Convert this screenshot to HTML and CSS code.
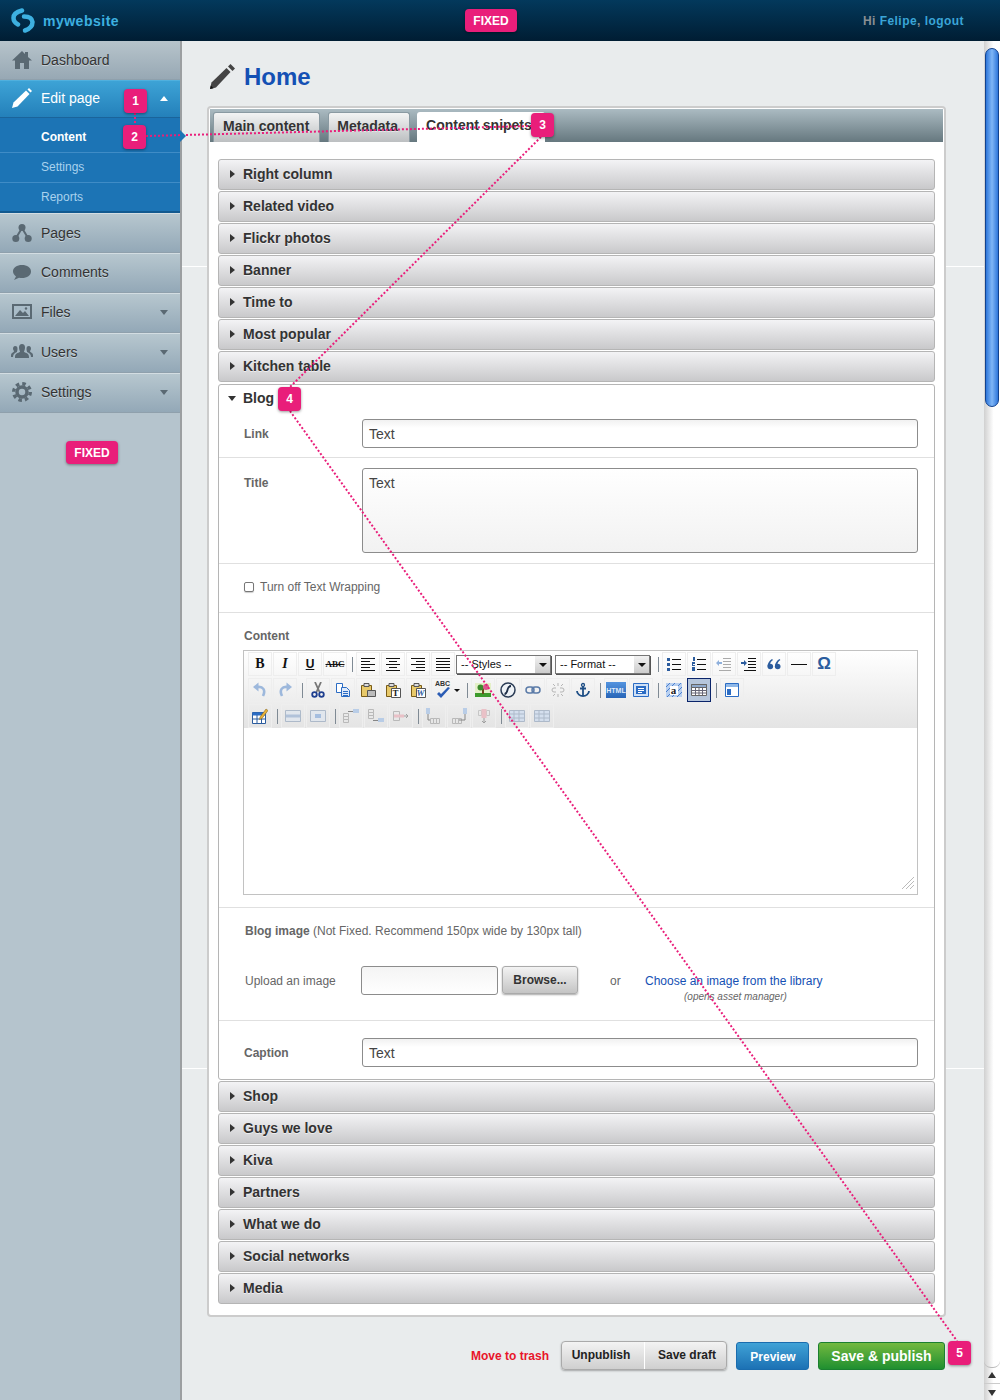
FILE: index.html
```html
<!DOCTYPE html>
<html lang="en">
<head>
    <meta charset="UTF-8">
    <title>mywebsite - Edit page</title>
    <link rel="stylesheet" href="styles.css">
</head>
<body>
    <svg class="defs" width="0" height="0">
        <symbol id="i-lines-l" viewBox="0 0 16 16"><path d="M1 2.500h14M1 5.500h9M1 8.500h14M1 11.500h9M1 14.500h14" stroke="#111" fill="none"/></symbol>
        <symbol id="i-lines-c" viewBox="0 0 16 16"><path d="M1 2.500h14M4 5.500h8M1 8.500h14M4 11.500h8M1 14.500h14" stroke="#111" fill="none"/></symbol>
        <symbol id="i-lines-r" viewBox="0 0 16 16"><path d="M1 2.500h14M6 5.500h9M1 8.500h14M6 11.500h9M1 14.500h14" stroke="#111" fill="none"/></symbol>
        <symbol id="i-lines-j" viewBox="0 0 16 16"><path d="M1 2.500h14M1 5.500h14M1 8.500h14M1 11.500h14M1 14.500h14" stroke="#111" fill="none"/></symbol>
        <symbol id="i-ul" viewBox="0 0 16 16"><path d="M6 3.500h9M6 8.500h9M6 13.500h9" stroke="#111" fill="none"/><path d="M1 2h3v3H1zM1 7h3v3H1zM1 12h3v3H1z" fill="#2b5c9e"/></symbol>
        <symbol id="i-ol" viewBox="0 0 16 16"><path d="M6 3.500h9M6 8.500h9M6 13.500h9" stroke="#111" fill="none"/><path d="M2 1h2v4H2zM1 6h3v2H2v1h2v1H1zM1 11h3v4H1z" fill="#2b5c9e"/></symbol>
        <symbol id="i-out" viewBox="0 0 16 16"><path d="M7 2.500h8M7 5.500h8M7 8.500h8M7 11.500h8M3 14.500h12" stroke="#aaa" fill="none"/><path d="M6 6H3V4L0 7l3 3V8h3z" fill="#8fb0dc"/></symbol>
        <symbol id="i-ind" viewBox="0 0 16 16"><path d="M7 2.500h8M7 5.500h8M7 8.500h8M7 11.500h8M3 14.500h12" stroke="#111" fill="none"/><path d="M0 6h3V4l3 3-3 3V8H0z" fill="#2b5c9e"/></symbol>
        <symbol id="i-quote" viewBox="0 0 16 16"><circle cx="4.300" cy="10.500" r="2.800" fill="#2b5c9e"/><circle cx="11.700" cy="10.500" r="2.800" fill="#2b5c9e"/><path d="M6 3C3 5 1.500 7.500 1.500 10.500L4 9c0-2 1-4 3-5zM13.400 3c-3 2-4.500 4.500-4.500 7.500l2.500-1.500c0-2 1-4 3-5z" fill="#2b5c9e"/></symbol>
        <symbol id="i-undo" viewBox="0 0 16 16"><path d="M5 5c6-1 9 3 6 9" stroke="#9db8dc" stroke-width="2.600" fill="none"/><path d="M6.500 0.500L1 5l5.500 4.500z" fill="#9db8dc"/></symbol>
        <symbol id="i-redo" viewBox="0 0 16 16"><path d="M11 5c-6-1-9 3-6 9" stroke="#9db8dc" stroke-width="2.600" fill="none"/><path d="M9.500 0.500L15 5 9.500 9.500z" fill="#9db8dc"/></symbol>
        <symbol id="i-cut" viewBox="0 0 16 16"><path d="M5 0l4.500 10M11 0L6.500 10" stroke="#777" stroke-width="1.800" fill="none"/><circle cx="4.500" cy="12.500" r="2.300" fill="none" stroke="#1f3f8f" stroke-width="1.800"/><circle cx="11.500" cy="12.500" r="2.300" fill="none" stroke="#1f3f8f" stroke-width="1.800"/></symbol>
        <symbol id="i-copy" viewBox="0 0 16 16"><path d="M1.500 1.500h6v9h-6z" fill="#fff" stroke="#2b6cc4"/><path d="M6.500 5.500h5l3 3v6h-8z" fill="#dfeafa" stroke="#2b6cc4"/><path d="M8 9.500h5M8 11.500h5M8 13.500h5" stroke="#2b6cc4"/></symbol>
        <symbol id="i-paste" viewBox="0 0 16 16"><path d="M1.500 3.500h10v11h-10z" fill="#e8c96a" stroke="#7a5c16"/><path d="M4 1.500h5v3H4z" fill="#ddd" stroke="#555"/><path d="M7.500 8.500h8v6h-8z" fill="#bbb" stroke="#555"/></symbol>
        <symbol id="i-paste-doc" viewBox="0 0 16 16"><path d="M1.500 3.500h10v11h-10z" fill="#e8c96a" stroke="#7a5c16"/><path d="M4 1.500h5v3H4z" fill="#ddd" stroke="#555"/><path d="M6.500 6.500h9v9h-9z" fill="#fff" stroke="#555"/></symbol>
        <symbol id="i-spell" viewBox="0 0 16 16"><path d="M2 10l4 4 9-10-2-1-7 7-2-2z" fill="#2b5cb4"/></symbol>
        <symbol id="i-img" viewBox="0 0 16 16"><path d="M0 1h16v14H0z" fill="#e4f0c8"/><path d="M0 11h16v4H0z" fill="#3c9a2c"/><path d="M8 12V6" stroke="#6b4a1a" stroke-width="2"/><circle cx="5.500" cy="5.500" r="3" fill="#3c8a2c"/><circle cx="11" cy="5" r="3" fill="#d85a8c"/></symbol>
        <symbol id="i-flash" viewBox="0 0 16 16"><circle cx="8" cy="8" r="7" fill="#eef2f6" stroke="#2b3c55" stroke-width="1.500"/><path d="M11 4C8 4 8 6 7.500 8S6 12 4.500 12" stroke="#1f2f48" stroke-width="1.800" fill="none"/></symbol>
        <symbol id="i-link" viewBox="0 0 16 16"><rect x="1" y="5" width="8" height="6" rx="3" fill="none" stroke="#5b7ba8" stroke-width="1.500"/><rect x="7" y="5" width="8" height="6" rx="3" fill="none" stroke="#5b7ba8" stroke-width="1.500"/></symbol>
        <symbol id="i-unlink" viewBox="0 0 16 16"><path d="M6 6H4a2 2 0 000 4h2M10 6h2a2 2 0 010 4h-2M3 2l2 2M8 1v3M13 2l-2 2M3 14l2-2M8 15v-3M13 14l-2-2" fill="none" stroke="#b5b5b5"/></symbol>
        <symbol id="i-anchor" viewBox="0 0 16 16"><circle cx="8" cy="3" r="1.500" fill="none" stroke="#1f4f86" stroke-width="1.300"/><path d="M8 4v10M5 6.500h6M2 9c0 3 3 5 6 5s6-2 6-5" fill="none" stroke="#1f4f86" stroke-width="1.800"/></symbol>
        <symbol id="i-box" viewBox="0 0 16 16"><path d="M.5 1.500h15v13H.5z" fill="#cfe0f6" stroke="#2b6cc4"/><path d="M3 4h10v8H3z" fill="#2b6cc4"/><path d="M5 6.500h6M5 8.500h6M5 10.500h4" stroke="#fff"/></symbol>
        <symbol id="i-attr" viewBox="0 0 16 16"><path d="M0 1h16v14H0z" fill="#b9d0f0"/><path d="M0 5l4-4M0 10l9-9M1 15L15 1M6 15l10-10M11 15l5-5" stroke="#4a80d0"/><path d="M4 4h8v9H4z" fill="#fff"/></symbol>
        <symbol id="i-table" viewBox="0 0 16 16"><path d="M.5 2.500h15v11H.5z" fill="#fff" stroke="#666"/><path d="M.5 2.500h15v3H.5z" fill="#8fa9cc" stroke="#666"/><path d="M.5 8.500h15M.5 11h15M4.500 5v8M8 5v8M11.500 5v8" stroke="#667"/></symbol>
        <symbol id="i-layout" viewBox="0 0 16 16"><path d="M1.500 1.500h13v13h-13z" fill="#fff" stroke="#2b6cc4"/><path d="M2 2h12v3H2z" fill="#8fb8e8"/><path d="M3 7h4v6H3z" fill="#2b6cc4"/></symbol>
        <symbol id="i-edit" viewBox="0 0 16 16"><path d="M.5 4.500h13v11H.5z" fill="#fff" stroke="#2b5c9e"/><path d="M.5 4.500h13v3H.5z" fill="#2b6cc4"/><path d="M.5 11h13M5 7v8M9.500 7v8" stroke="#2b5c9e"/><path d="M8 9l6-8 2 1.500-6 8-2.500 1z" fill="#e8b23a" stroke="#7a5c16" stroke-width=".5"/></symbol>
        <symbol id="i-row" viewBox="0 0 16 16"><path d="M.5 2.500h15v11H.5z" fill="#dfe6ef" stroke="#9aabc0"/><path d="M1 6.500h14v3H1z" fill="#9fb6d4"/></symbol>
        <symbol id="i-cell" viewBox="0 0 16 16"><path d="M.5 2.500h15v11H.5z" fill="#dfe6ef" stroke="#9aabc0"/><path d="M5 6h6v4H5z" fill="#8fb0dc"/></symbol>
        <symbol id="i-row-before" viewBox="0 0 16 16"><path d="M.5 5.500h5v3h-5zM.5 8.500h5v3h-5zM.5 11.500h5v3h-5z" fill="none" stroke="#aaa"/><path d="M10 1h6v4h-6z" fill="#a9c4e6"/><path d="M5 3.500h5" stroke="#666"/></symbol>
        <symbol id="i-row-after" viewBox="0 0 16 16"><path d="M.5 1.500h5v3h-5zM.5 4.500h5v3h-5zM.5 7.500h5v3h-5z" fill="none" stroke="#aaa"/><path d="M10 10h6v4h-6z" fill="#a9c4e6"/><path d="M5 12.500h5" stroke="#666"/></symbol>
        <symbol id="i-row-del" viewBox="0 0 16 16"><path d="M.5 3.500h6v9h-6z" fill="none" stroke="#aaa"/><path d="M1 6.500h10v3H1z" fill="#eab4bc"/><path d="M11 8h4M13 6l2 2-2 2" fill="none" stroke="#888"/></symbol>
        <symbol id="i-col-before" viewBox="0 0 16 16"><path d="M4.500 10.500h3v5h-3zM7.500 10.500h3v5h-3zM10.500 10.500h3v5h-3z" fill="none" stroke="#aaa"/><path d="M0 0h4v6H0z" fill="#a9c4e6"/><path d="M2 6v6h2" fill="none" stroke="#666"/></symbol>
        <symbol id="i-col-after" viewBox="0 0 16 16"><path d="M1.500 10.500h3v5h-3zM4.500 10.500h3v5h-3zM7.500 10.500h3v5h-3z" fill="none" stroke="#aaa"/><path d="M12 0h4v6h-4z" fill="#a9c4e6"/><path d="M14 6v6h-6" fill="none" stroke="#666"/></symbol>
        <symbol id="i-col-del" viewBox="0 0 16 16"><path d="M2.500 2.500h3v5h-3zM10.500 2.500h3v5h-3z" fill="none" stroke="#bbb"/><path d="M5.500 1h5v9h-5z" fill="#eab4bc"/><path d="M8 10v5M6 13l2 2 2-2" fill="none" stroke="#888"/></symbol>
        <symbol id="i-grid" viewBox="0 0 16 16"><path d="M.5 2.500h15v11H.5z" fill="#cddcf0" stroke="#9aabc0"/><path d="M.5 6h15M.5 10h15M5 2.500v11M10 2.500v11" stroke="#9aabc0"/></symbol>
    </svg>

    <header class="topbar">
        <a class="logo" href="#">
            <svg width="26" height="26" viewBox="0 0 26 26"><path d="M12 2.500Q3.500 4.500 3.500 10Q3.500 14 8 16.500" fill="none" stroke="#3db0e0" stroke-width="4.500" stroke-linecap="round"/><path d="M14 8.500Q22 8.500 22.500 14Q22.500 20 15 22.500" fill="none" stroke="#3db0e0" stroke-width="4.500" stroke-linecap="round"/></svg>
            <span>mywebsite</span>
        </a>
        <span class="tag">FIXED</span>
        <p class="greeting">Hi <a href="#">Felipe</a>, <a href="#">logout</a></p>
    </header>

    <div class="layout">
        <nav class="sidebar">
            <a class="nav-item" href="#">
                <svg class="nav-icon" viewBox="0 0 20 20"><path d="M10 1L0 10.500h3V19h5v-6h4v6h5v-8.500h3L16 7V2h-3v2z" fill="#5a6973"/></svg>
                Dashboard
            </a>
            <a class="nav-item nav-active" href="#">
                <svg class="nav-icon" viewBox="0 0 20 20"><path d="M0 20l1.500-5.500L14 2.500l3.500 3.500L5.500 18.500z" fill="#fff"/><path d="M15.500 1.500L17 0l3 3-1.500 1.500z" fill="#fff"/></svg>
                Edit page
                <i class="caret caret-up"></i>
            </a>
            <ul class="subnav">
                <li class="sub-current"><a href="#">Content</a></li>
                <li><a href="#">Settings</a></li>
                <li><a href="#">Reports</a></li>
            </ul>
            <a class="nav-item nav-pages" href="#">
                <svg class="nav-icon" viewBox="0 0 20 20"><path d="M10 5L4 15M10 5l6 10" stroke="#5a6973" stroke-width="2" fill="none"/><circle cx="10" cy="4.500" r="3.500" fill="#5a6973"/><circle cx="3.800" cy="15.500" r="3.500" fill="#5a6973"/><circle cx="16.200" cy="15.500" r="3.500" fill="#5a6973"/></svg>
                Pages
            </a>
            <a class="nav-item" href="#">
                <svg class="nav-icon" viewBox="0 0 20 20"><path d="M10 3c5 0 9 2.500 9 6.500S15 16 10 16c-1 0-2 0-3-.3L2 18l2-3.500C2 13 1 11 1 9.500 1 5.500 5 3 10 3z" fill="#5a6973"/></svg>
                Comments
            </a>
            <a class="nav-item nav-more" href="#">
                <svg class="nav-icon" viewBox="0 0 20 20"><path d="M0 2h20v15H0z" fill="#5a6973"/><path d="M2 4h16v11H2z" fill="#a9bcc8"/><path d="M3 14l5-6 3 3 2-2 4 5z" fill="#5a6973"/><circle cx="14" cy="6.500" r="1.200" fill="#5a6973"/></svg>
                Files
                <i class="caret"></i>
            </a>
            <a class="nav-item nav-more" href="#">
                <svg class="nav-icon nav-icon-wide" viewBox="0 0 22 20"><path d="M11 2c2 0 3 1.500 3 3.500S13 9 13 10c2 1 5 1 5 5v1H4v-1c0-4 3-4 5-5 0-1-1-2.500-1-4.500S9 2 11 2z" fill="#5a6973"/><path d="M4 4c2 0 2.500 1 2.500 3 0 1.500-.5 2-.5 3-2 1-4 2-4 5H0v-2c0-2 2-2.500 3-3.500 0-1-1-1.500-1-3S3 4 4 4zM18 4c-2 0-2.500 1-2.500 3 0 1.500.5 2 .5 3 2 1 4 2 4 5h2v-2c0-2-2-2.500-3-3.500 0-1 1-1.500 1-3S19 4 18 4z" fill="#5a6973"/></svg>
                Users
                <i class="caret"></i>
            </a>
            <a class="nav-item nav-more" href="#">
                <svg class="nav-icon" viewBox="0 0 20 20"><circle cx="10" cy="10" r="8.300" fill="none" stroke="#5a6973" stroke-width="3.400" stroke-dasharray="3.500 3.020"/><circle cx="10" cy="10" r="5" fill="none" stroke="#5a6973" stroke-width="3.500"/></svg>
                Settings
                <i class="caret"></i>
            </a>
            <div class="sidebar-foot"><span class="tag">FIXED</span></div>
        </nav>

        <main class="main">
            <div class="page-head">
                <svg width="25" height="25" viewBox="0 0 25 25"><path d="M0 25l1.500-6.500L16.500 4l4 4L6 23.500z" fill="#444"/><path d="M0 25l.8-3.500 2.700 2.700z" fill="#111"/><path d="M18 2.500L20.500 0 25 4.500 22.500 7z" fill="#444"/></svg>
                <h1>Home</h1>
            </div>

            <section class="panel">
                <div class="tabs">
                    <a class="tab" href="#">Main content</a>
                    <a class="tab" href="#">Metadata</a>
                    <a class="tab tab-active" href="#">Content snipets</a>
                </div>

                <div class="accordion">
                    <div class="acc-row"><i class="arrow"></i>Right column</div>
                    <div class="acc-row"><i class="arrow"></i>Related video</div>
                    <div class="acc-row"><i class="arrow"></i>Flickr photos</div>
                    <div class="acc-row"><i class="arrow"></i>Banner</div>
                    <div class="acc-row"><i class="arrow"></i>Time to</div>
                    <div class="acc-row"><i class="arrow"></i>Most popular</div>
                    <div class="acc-row"><i class="arrow"></i>Kitchen table</div>

                    <div class="acc-open">
                        <div class="acc-head"><i class="arrow arrow-down"></i>Blog</div>

                        <div class="field field-link">
                            <label class="field-label">Link</label>
                            <div class="text-input">Text</div>
                        </div>
                        <div class="field field-title">
                            <label class="field-label">Title</label>
                            <div class="text-input text-area">Text</div>
                        </div>
                        <div class="field-check">
                            <span class="check"></span>
                            Turn off Text Wrapping
                        </div>

                        <div class="field-editor">
                            <label class="field-label">Content</label>
                            <div class="editor">
                                <div class="toolbar">
                                    <div class="tool-row">
                                        <span class="tb tb-text tb-b">B</span>
                                        <span class="tb tb-text tb-i">I</span>
                                        <span class="tb tb-text tb-u">U</span>
                                        <span class="tb tb-text tb-s">ABC</span>
                                        <span class="sep"></span>
                                        <span class="tb"><svg><use href="#i-lines-l"/></svg></span>
                                        <span class="tb"><svg><use href="#i-lines-c"/></svg></span>
                                        <span class="tb"><svg><use href="#i-lines-r"/></svg></span>
                                        <span class="tb"><svg><use href="#i-lines-j"/></svg></span>
                                        <span class="combo">-- Styles --<i></i></span>
                                        <span class="combo">-- Format --<i></i></span>
                                        <span class="sep sep-wide"></span>
                                        <span class="tb"><svg><use href="#i-ul"/></svg></span>
                                        <span class="tb"><svg><use href="#i-ol"/></svg></span>
                                        <span class="tb"><svg><use href="#i-out"/></svg></span>
                                        <span class="tb"><svg><use href="#i-ind"/></svg></span>
                                        <span class="tb"><svg><use href="#i-quote"/></svg></span>
                                        <span class="tb tb-text tb-hr"></span>
                                        <span class="tb tb-text tb-omega">Ω</span>
                                    </div>
                                    <div class="tool-row">
                                        <span class="tb"><svg><use href="#i-undo"/></svg></span>
                                        <span class="tb"><svg><use href="#i-redo"/></svg></span>
                                        <span class="sep"></span>
                                        <span class="tb"><svg><use href="#i-cut"/></svg></span>
                                        <span class="tb"><svg><use href="#i-copy"/></svg></span>
                                        <span class="tb"><svg><use href="#i-paste"/></svg></span>
                                        <span class="tb tb-letter"><svg><use href="#i-paste-doc"/></svg><b>T</b></span>
                                        <span class="tb tb-letter tb-word"><svg><use href="#i-paste-doc"/></svg><b>W</b></span>
                                        <span class="tb tb-split"><b>ABC</b><svg><use href="#i-spell"/></svg></span>
                                        <i class="split-arrow"></i>
                                        <span class="sep"></span>
                                        <span class="tb"><svg><use href="#i-img"/></svg></span>
                                        <span class="tb"><svg><use href="#i-flash"/></svg></span>
                                        <span class="tb"><svg><use href="#i-link"/></svg></span>
                                        <span class="tb"><svg><use href="#i-unlink"/></svg></span>
                                        <span class="tb"><svg><use href="#i-anchor"/></svg></span>
                                        <span class="sep"></span>
                                        <span class="tb tb-html">HTML</span>
                                        <span class="tb"><svg><use href="#i-box"/></svg></span>
                                        <span class="sep"></span>
                                        <span class="tb tb-letter tb-attr"><svg><use href="#i-attr"/></svg><b>a</b></span>
                                        <span class="tb tb-on"><svg><use href="#i-table"/></svg></span>
                                        <span class="sep"></span>
                                        <span class="tb"><svg><use href="#i-layout"/></svg></span>
                                    </div>
                                    <div class="tool-row">
                                        <span class="tb"><svg><use href="#i-edit"/></svg></span>
                                        <span class="sep"></span>
                                        <span class="tb tb-off"><svg><use href="#i-row"/></svg></span>
                                        <span class="tb tb-off"><svg><use href="#i-cell"/></svg></span>
                                        <span class="sep"></span>
                                        <span class="tb tb-off"><svg><use href="#i-row-before"/></svg></span>
                                        <span class="tb tb-off"><svg><use href="#i-row-after"/></svg></span>
                                        <span class="tb tb-off"><svg><use href="#i-row-del"/></svg></span>
                                        <span class="sep"></span>
                                        <span class="tb tb-off"><svg><use href="#i-col-before"/></svg></span>
                                        <span class="tb tb-off"><svg><use href="#i-col-after"/></svg></span>
                                        <span class="tb tb-off"><svg><use href="#i-col-del"/></svg></span>
                                        <span class="sep"></span>
                                        <span class="tb tb-off"><svg><use href="#i-grid"/></svg></span>
                                        <span class="tb tb-off"><svg><use href="#i-grid"/></svg></span>
                                    </div>
                                </div>
                                <div class="editor-body">
                                    <svg class="grip" width="14" height="14" viewBox="0 0 14 14"><path d="M13 1L1 13M13 5l-8 8M13 9l-4 4" stroke="#bbb" fill="none"/></svg>
                                </div>
                            </div>
                        </div>

                        <div class="field-image">
                            <p class="image-note"><b>Blog image</b> (Not Fixed. Recommend 150px wide by 130px tall)</p>
                            <div class="upload-row">
                                <span class="upload-label">Upload an image</span>
                                <div class="file-input"></div>
                                <a class="browse" href="#">Browse...</a>
                                <span class="upload-or">or</span>
                                <div class="library">
                                    <a href="#">Choose an image from the library</a>
                                    <small>(opens asset manager)</small>
                                </div>
                            </div>
                        </div>

                        <div class="field field-caption">
                            <label class="field-label">Caption</label>
                            <div class="text-input">Text</div>
                        </div>
                    </div>

                    <div class="acc-row"><i class="arrow"></i>Shop</div>
                    <div class="acc-row"><i class="arrow"></i>Guys we love</div>
                    <div class="acc-row"><i class="arrow"></i>Kiva</div>
                    <div class="acc-row"><i class="arrow"></i>Partners</div>
                    <div class="acc-row"><i class="arrow"></i>What we do</div>
                    <div class="acc-row"><i class="arrow"></i>Social networks</div>
                    <div class="acc-row"><i class="arrow"></i>Media</div>
                </div>
            </section>

            <div class="actions">
                <a class="trash" href="#">Move to trash</a>
                <div class="btn-group">
                    <a class="btn" href="#">Unpublish</a>
                    <a class="btn" href="#">Save draft</a>
                </div>
                <a class="btn-preview" href="#">Preview</a>
                <a class="btn-save" href="#">Save &amp; publish</a>
            </div>
        </main>

        <div class="scrollbar">
            <div class="thumb"></div>
            <div class="track"></div>
            <span class="sb-arrow sb-up"></span>
            <span class="sb-arrow sb-down"></span>
        </div>
    </div>

    <!-- annotation overlay -->
    <svg class="notes" width="1000" height="1400">
        <path d="M135 113V125M146 136L531 126M541 137L290 387M290 411L957 1341" fill="none" stroke="#e91e7a" stroke-width="2" stroke-dasharray="2 2"/>
    </svg>
    <span class="badge badge-1">1</span>
    <span class="badge badge-2">2</span>
    <span class="badge badge-3">3</span>
    <span class="badge badge-4">4</span>
    <span class="badge badge-5">5</span>
</body>
</html>
```

FILE: styles.css
```css
* {
    box-sizing: border-box;
}
html, body {
    margin: 0;
    padding: 0;
}
body {
    position: relative;
    width: 1000px;
    height: 1400px;
    overflow: hidden;
    font-family: "Liberation Sans", Arial, sans-serif;
    font-size: 12px;
    color: #333;
    background-color: #e9eced;
}
a {
    color: inherit;
    text-decoration: none;
}
.defs {
    position: absolute;
}

/* top bar */
.topbar {
    display: flex;
    align-items: center;
    height: 41px;
    background: linear-gradient(#03395c, #001d33);
    padding: 0 36px 0 10px;
}
.logo {
    display: flex;
    align-items: center;
    gap: 7px;
    width: 455px;
    font-size: 14px;
    font-weight: bold;
    letter-spacing: .5px;
    color: #3db0e0;
}
.tag {
    display: inline-block;
    width: 52px;
    height: 23px;
    line-height: 24px;
    text-align: center;
    background: #e91e7a;
    color: #fff;
    font-size: 12px;
    font-weight: bold;
    border-radius: 4px;
    box-shadow: 0 1px 3px rgba(0, 0, 0, .4);
}
.greeting {
    margin: 0 0 0 auto;
    font-weight: bold;
    letter-spacing: .45px;
    color: #8a8f93;
}
.greeting a {
    color: #3aa5d8;
}

.layout {
    display: flex;
    height: 1359px;
    background-image: linear-gradient(transparent 225px, #fff 225px, #fff 226px, transparent 226px);
    background-size: 100% 802px;
}

/* sidebar */
.sidebar {
    width: 182px;
    flex-shrink: 0;
    background: #b5c4cd;
    border-right: 2px solid #9c9fa1;
}
.nav-item {
    position: relative;
    display: flex;
    align-items: center;
    gap: 9px;
    height: 40px;
    padding: 0 0 2px 12px;
    font-size: 14px;
    color: #333;
    text-shadow: 0 1px 0 rgba(255, 255, 255, .4);
    background: linear-gradient(#b7c7cf, #93a8b7);
    border-top: 1px solid #d3dde2;
    border-bottom: 1px solid #8fa0ac;
}
.nav-item:first-child {
    height: 39px;
    padding-bottom: 0;
    border-top: 0;
    background: linear-gradient(#b7c4cb, #97a8b4);
}
.nav-pages {
    padding-bottom: 1px;
}
.nav-icon {
    width: 20px;
    height: 20px;
    flex-shrink: 0;
}
.nav-icon-wide {
    width: 22px;
    margin-left: -1px;
    margin-right: -1px;
}
.nav-active {
    height: 38px;
    color: #fff;
    text-shadow: none;
    background: linear-gradient(#3da3d6, #2480ba);
    border-top: 1px solid #50b0de;
    border-bottom: 1px solid #1a649b;
}
.nav-active::after {
    content: "";
    position: absolute;
    left: 75px;
    bottom: -7px;
    border-left: 9px solid transparent;
    border-right: 9px solid transparent;
    border-top: 6px solid #2480ba;
}
.caret {
    position: absolute;
    right: 12px;
    top: 16px;
    border-left: 4.5px solid transparent;
    border-right: 4.5px solid transparent;
    border-top: 5px solid #5a6973;
}
.caret-up {
    top: 15px;
    border-top: 0;
    border-bottom: 5px solid #fff;
}
.subnav {
    position: relative;
    list-style: none;
    margin: 0;
    padding: 0;
    background: #1c74b5;
    border-bottom: 2px solid #12598f;
}
.subnav li {
    height: 30px;
    line-height: 29px;
    padding-left: 41px;
    color: #a9d2ee;
    border-bottom: 1px solid #3f8cc6;
}
.subnav li:last-child {
    height: 28px;
    border-bottom: 0;
}
.subnav .sub-current {
    height: 35px;
    line-height: 38px;
    color: #fff;
    font-weight: bold;
}
.sub-current::after {
    content: "";
    position: absolute;
    right: -6px;
    top: 12px;
    z-index: 1;
    border-top: 6px solid transparent;
    border-bottom: 6px solid transparent;
    border-left: 6px solid #1c74b5;
}
.sidebar-foot {
    padding: 28px 0 0 66px;
}

/* main column */
.main {
    flex: 1;
    padding: 0 38px 0 25px;
}
.page-head {
    display: flex;
    align-items: center;
    gap: 9px;
    height: 65px;
    padding: 6px 0 0 3px;
}
.page-head h1 {
    margin: 0;
    font-size: 24px;
    font-weight: bold;
    color: #1450b4;
}
.panel {
    background: #fff;
    border: 2px solid #ccc;
    border-radius: 4px;
    padding: 1px 1px 11px;
    height: 1211px;
}
.tabs {
    display: flex;
    gap: 8px;
    height: 33px;
    padding: 3px 0 0 3px;
    background: linear-gradient(#abbbc2, #66787f);
}
.tab {
    height: 30px;
    line-height: 27px;
    padding: 0 10px 0 9px;
    font-size: 14px;
    font-weight: bold;
    color: #333;
    text-shadow: 0 1px 0 rgba(255, 255, 255, .5);
    background: linear-gradient(#f3f4f4, #bcbfc1);
    border: 1px solid #8a9aa2;
    border-bottom: 0;
    border-radius: 3px 3px 0 0;
}
.tab + .tab {
    padding-left: 8px;
    padding-right: 11px;
}
.tab-active, .tab + .tab-active {
    width: 128px;
    margin-left: -1px;
    padding-left: 9px;
    background: #fff;
    border: 0;
}
.accordion {
    display: flex;
    flex-direction: column;
    gap: 1px;
    padding: 17px 8px 0;
}
.acc-row {
    display: flex;
    align-items: center;
    height: 31px;
    padding: 0 0 2px 11px;
    font-size: 14px;
    font-weight: bold;
    color: #333;
    text-shadow: 0 1px 0 rgba(255, 255, 255, .6);
    background: linear-gradient(#f3f3f5, #c9c9cb);
    border: 1px solid #b5b5b5;
    border-radius: 3px;
}
.arrow {
    width: 0;
    height: 0;
    margin-right: 8px;
    border-top: 4px solid transparent;
    border-bottom: 4px solid transparent;
    border-left: 5px solid #333;
}
.arrow-down {
    margin-left: -2px;
    margin-right: 7px;
    border-left: 4px solid transparent;
    border-right: 4px solid transparent;
    border-top: 5px solid #333;
    border-bottom: 0;
}
.acc-open {
    margin-top: 1px;
    height: 696px;
    background: #fff;
    border: 1px solid #b5b5b5;
    border-radius: 3px;
}
.acc-head {
    display: flex;
    align-items: center;
    height: 29px;
    margin-bottom: 5px;
    padding: 0 0 3px 11px;
    font-size: 14px;
    font-weight: bold;
    color: #333;
}

/* blog form */
.field {
    display: flex;
    padding: 0 16px 9px 25px;
    border-bottom: 1px solid #e0e0e0;
}
.field-title {
    padding-top: 10px;
    padding-bottom: 10px;
}
.field-caption {
    padding-top: 17px;
    border-bottom: 0;
}
.field-label {
    display: block;
    width: 118px;
    flex-shrink: 0;
    padding-top: 8px;
    font-weight: bold;
    color: #666;
}
.text-input {
    flex: 1;
    height: 29px;
    line-height: 28px;
    padding-left: 6px;
    font-size: 14px;
    color: #444;
    border: 1px solid #8c8c8c;
    border-radius: 3px;
    background: linear-gradient(#f1f1f1, #fff 30%);
}
.text-area {
    height: 85px;
    line-height: 28px;
    background: linear-gradient(#fff, #f2f2f2);
}
.field-check {
    display: flex;
    align-items: center;
    gap: 6px;
    height: 49px;
    padding: 0 0 2px 25px;
    color: #666;
    border-bottom: 1px solid #e0e0e0;
}
.check {
    width: 10px;
    height: 10px;
    background: #fff;
    border: 1px solid #777;
    border-radius: 2px;
    box-shadow: 0 1px 1px rgba(0, 0, 0, .2);
}
.field-editor {
    padding: 15px 16px 12px 24px;
    border-bottom: 1px solid #e0e0e0;
}
.field-editor .field-label {
    width: auto;
    height: 22px;
    padding: 0 0 0 1px;
    line-height: 17px;
}

/* text editor */
.editor {
    height: 245px;
    border: 1px solid #c2c2c2;
    display: flex;
    flex-direction: column;
}
.toolbar {
    height: 77px;
    padding: 0 4px;
    background: linear-gradient(#fff, #e4e4e4);
}
.tool-row {
    display: flex;
    align-items: center;
    height: 26px;
    gap: 1px;
}
.tb {
    display: flex;
    align-items: center;
    justify-content: center;
    width: 24px;
    height: 24px;
    border: 1px solid #eee;
    flex-shrink: 0;
}
.tb svg {
    width: 16px;
    height: 16px;
}
.tb-text {
    font-family: "Liberation Serif", serif;
    font-size: 14px;
    font-weight: bold;
    color: #111;
}
.tb-i {
    font-style: italic;
}
.tb-u {
    text-decoration: underline;
    font-family: "Liberation Sans", sans-serif;
    font-size: 12px;
}
.tb-s {
    font-size: 9px;
    text-decoration: line-through;
}
.tb-hr::before {
    content: "";
    width: 16px;
    height: 1px;
    background: #111;
}
.tb-omega {
    font-family: "Liberation Sans", sans-serif;
    color: #2b5c9e;
    font-size: 17px;
}
.tb-html {
    font-size: 7px;
    font-weight: bold;
    color: #dfeafa;
    background: linear-gradient(#5b9ce6, #1f5cb0);
    background-clip: content-box;
    padding: 3px 1px;
}
.tb-letter {
    position: relative;
}
.tb-letter b {
    position: absolute;
    right: 4px;
    bottom: 3px;
    width: 9px;
    line-height: 10px;
    text-align: center;
    font-family: "Liberation Serif", serif;
    font-size: 9px;
    color: #222;
}
.tb-word b {
    font-style: italic;
    color: #2b5c9e;
}
.tb-attr b {
    right: 7px;
    bottom: 6px;
    font-size: 11px;
}
.tb-split {
    position: relative;
    width: 22px;
    border-right: 0;
}
.tb-split b {
    position: absolute;
    left: 3px;
    top: 1px;
    font-size: 7px;
    color: #333;
}
.tb-split svg {
    margin-top: 3px;
}
.split-arrow {
    margin-right: 2px;
    border-left: 3px solid transparent;
    border-right: 3px solid transparent;
    border-top: 3px solid #111;
}
.tb-on {
    background: #b6c6dc;
    border: 1px solid #0a246a;
}
.tb-off svg {
    opacity: .75;
}
.sep {
    width: 1px;
    height: 15px;
    margin: 0 2px 0 4px;
    background: #7f8a94;
    flex-shrink: 0;
}
.sep-wide {
    margin-left: 7px;
}
.combo {
    position: relative;
    width: 95px;
    height: 19px;
    line-height: 17px;
    padding-left: 4px;
    font-size: 11px;
    color: #111;
    background: #fff;
    border: 1px solid #777;
    box-shadow: 1px 1px 0 #555;
    flex-shrink: 0;
}
.combo + .combo {
    margin-left: 3px;
}
.combo i {
    position: absolute;
    right: 0;
    top: 0;
    width: 15px;
    height: 17px;
    background: linear-gradient(#f2f2f2, #ccc);
}
.combo i::after {
    content: "";
    position: absolute;
    left: 4px;
    top: 7px;
    border-left: 4px solid transparent;
    border-right: 4px solid transparent;
    border-top: 4px solid #111;
}
.editor-body {
    position: relative;
    flex: 1;
    background: #fff;
}
.grip {
    position: absolute;
    right: 2px;
    bottom: 4px;
}

/* image upload */
.field-image {
    height: 113px;
    padding: 16px 0 0 26px;
    border-bottom: 1px solid #e0e0e0;
    color: #666;
}
.image-note {
    margin: 0 0 27px;
    line-height: 15px;
}
.upload-row {
    display: flex;
    align-items: flex-start;
}
.upload-label {
    width: 116px;
    padding-top: 8px;
}
.file-input {
    width: 137px;
    height: 29px;
    margin-right: 4px;
    background: linear-gradient(#f4f4f4, #fff);
    border: 1px solid #8c8c8c;
    border-radius: 3px;
}
.browse {
    width: 76px;
    height: 28px;
    line-height: 27px;
    text-align: center;
    font-weight: bold;
    color: #333;
    background: linear-gradient(#f3f3f3, #c4c4c4);
    border: 1px solid #aaa;
    border-radius: 3px;
    box-shadow: 0 1px 2px rgba(0, 0, 0, .35);
}
.upload-or {
    width: 67px;
    padding: 8px 0 0 32px;
}
.library {
    padding-top: 8px;
}
.library a {
    display: block;
    color: #1450b4;
}
.library small {
    display: block;
    margin-top: 3px;
    padding-left: 39px;
    font-size: 10px;
    font-style: italic;
}

/* bottom actions */
.actions {
    display: flex;
    align-items: center;
    justify-content: flex-end;
    gap: 9px;
    margin-top: 24px;
    padding-right: 1px;
    font-weight: bold;
}
.trash {
    margin-right: 3px;
    color: #e8152a;
}
.btn-group {
    display: flex;
    width: 166px;
    height: 29px;
    background: linear-gradient(#f3f3f3, #cfcfcf);
    border: 1px solid #aaa;
    border-radius: 4px;
    box-shadow: 0 1px 2px rgba(0, 0, 0, .3);
}
.btn {
    flex: 1;
    padding-right: 4px;
    line-height: 26px;
    text-align: center;
    color: #222;
}
.btn + .btn {
    padding: 0 0 0 3px;
    border-left: 1px solid #fff;
}
.btn-preview {
    width: 73px;
    height: 28px;
    padding-left: 1px;
    line-height: 29px;
    text-align: center;
    color: #fff;
    background: linear-gradient(#40a2d6, #1c71b4);
    border: 1px solid #1a6cae;
    border-radius: 3px;
}
.btn-save {
    width: 127px;
    height: 28px;
    line-height: 27px;
    text-align: center;
    font-size: 14px;
    color: #fff;
    background: linear-gradient(#73b93f, #1f8f30);
    border: 1px solid #1b8030;
    border-radius: 3px;
}

/* fake scrollbar */
.scrollbar {
    position: relative;
    width: 16px;
    flex-shrink: 0;
    background: linear-gradient(90deg, #d0d0d0, #fff 60%);
}
.thumb {
    position: absolute;
    left: 1px;
    top: 7px;
    width: 14px;
    height: 359px;
    border-radius: 7px;
    border: 1px solid #11428f;
    background: linear-gradient(90deg, #2e76da, #7fb6f6 50%, #2e76da);
}
.track {
    position: absolute;
    left: 0;
    bottom: 32px;
    width: 16px;
    height: 14px;
    border-radius: 0 0 7px 7px;
    border-bottom: 1px solid #bbb;
}
.track::after {
    content: "";
    position: absolute;
    left: 0;
    top: 29px;
    width: 16px;
    height: 1px;
    background: #ccc;
}
.sb-arrow {
    position: absolute;
    left: 4px;
    border-left: 4px solid transparent;
    border-right: 4px solid transparent;
}
.sb-up {
    bottom: 22px;
    border-bottom: 6px solid #333;
}
.sb-down {
    bottom: 4px;
    border-top: 6px solid #333;
}

/* annotations */
.notes {
    position: absolute;
    left: 0;
    top: 0;
    pointer-events: none;
}
.badge {
    position: absolute;
    width: 23px;
    height: 24px;
    line-height: 24px;
    text-align: center;
    font-size: 12px;
    font-weight: bold;
    color: #fff;
    background: #e91e7a;
    border-radius: 4px;
    box-shadow: 0 1px 3px rgba(0, 0, 0, .4);
}
.badge-1 { left: 124px; top: 89px; }
.badge-2 { left: 123px; top: 125px; }
.badge-3 { left: 531px; top: 113px; }
.badge-4 { left: 278px; top: 387px; }
.badge-5 { left: 948px; top: 1341px; }
```
